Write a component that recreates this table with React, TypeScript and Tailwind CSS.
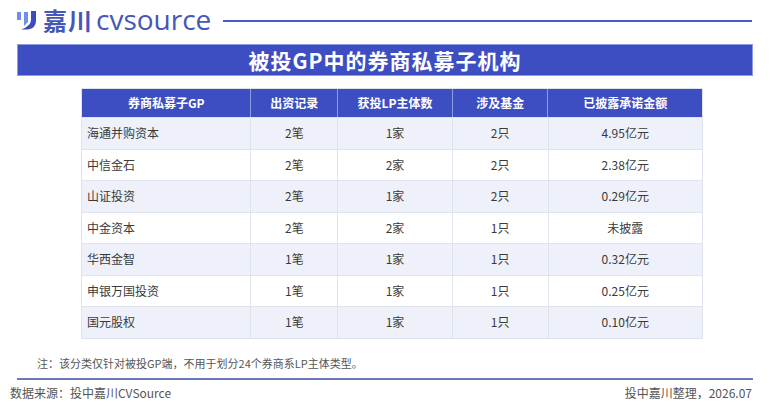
import React from "react";

const rows = [
  ["海通并购资本", "2笔", "1家", "2只", "4.95亿元"],
  ["中信金石", "2笔", "2家", "2只", "2.38亿元"],
  ["山证投资", "2笔", "1家", "2只", "0.29亿元"],
  ["中金资本", "2笔", "2家", "1只", "未披露"],
  ["华西金智", "1笔", "1家", "1只", "0.32亿元"],
  ["申银万国投资", "1笔", "1家", "1只", "0.25亿元"],
  ["国元股权", "1笔", "1家", "1只", "0.10亿元"],
];

const heads = ["券商私募子GP", "出资记录", "获投LP主体数", "涉及基金", "已披露承诺金额"];
const widths = ["w-[170px]", "w-[87px]", "w-[115px]", "w-[96px]", "w-[154px]"];

export default function App() {
  return (
    <div
      className="w-[770px] h-[406px] bg-white overflow-hidden relative"
      style={{ fontFamily: '"Noto Sans CJK SC", "Noto Sans", sans-serif' }}
    >
      {/* header logo row */}
      <div className="flex items-center h-[40px] pl-[16px] pr-[18px]">
        <svg width="22" height="20" viewBox="0 0 22 20" className="mr-[5px]">
          <path d="M1 2 L5 2 L5 10 L1 10 Z" fill="#6f8ff0" />
          <path d="M8 2 L12 2 L12 12 L8 16 Z" fill="#6f8ff0" />
          <path d="M15 1 L20 1 L20 11 Q20 18 12 19.5 L5 19.5 Q15 16 15 10 Z" fill="#3b4cc0" />
        </svg>
        <span className="text-[24px] leading-[36px] font-bold text-[#4557b8] tracking-[1px]">嘉川</span>
        <span className="text-[28px] leading-[38px] text-[#4557b8] ml-[3px] pb-[3px]" style={{ fontFamily: '"Open Sans", sans-serif', fontWeight: 500 }}>cvsource</span>
        <div className="flex-1 h-[2px] bg-[#4a5cc2] ml-[12px] mt-[2px]" />
      </div>

      {/* title bar */}
      <div className="mx-[17px] mt-[4px] h-[32px] bg-[#3d4ec2] border border-[#8d9be0] flex items-center justify-center">
        <span className="text-white text-[21px] font-bold leading-none tracking-[1px]">被投GP中的券商私募子机构</span>
      </div>

      {/* table */}
      <div className="ml-[81px] mt-[12px] w-[622px] border border-[#dfe3ee]">
        <div className="flex h-[28px] bg-[#3d4ec2]">
          {heads.map((h, i) => (
            <div
              key={h}
              className={`${widths[i]} flex items-center justify-center text-white text-[12px] font-bold ${i < 4 ? "border-r border-[#8d9be0]" : ""}`}
            >
              {h}
            </div>
          ))}
        </div>
        {rows.map((r, ri) => (
          <div
            key={r[0]}
            className={`flex h-[31.5px] ${ri % 2 === 0 ? "bg-[#eef1f9]" : "bg-white"} border-t border-[#dfe3ee]`}
          >
            {r.map((c, i) => (
              <div
                key={i}
                className={`${widths[i]} flex items-center ${i === 0 ? "justify-start pl-[5px]" : "justify-center"} text-[12px] text-[#3a3a3a] ${i < 4 ? "border-r border-[#dfe3ee]" : ""}`}
              >
                {c}
              </div>
            ))}
          </div>
        ))}
      </div>

      {/* note */}
      <div className="ml-[37px] mt-[19px] text-[11px] text-[#555555] leading-none">
        注：该分类仅针对被投GP端，不用于划分24个券商系LP主体类型。
      </div>
      <div className="mx-[17px] mt-[9px] h-[2px] bg-[#6c78b8]" />
      <div className="flex justify-between pl-[10px] pr-[18px] mt-[7px] text-[12px] text-[#555555] leading-none">
        <span>数据来源：投中嘉川CVSource</span>
        <span>投中嘉川整理，2026.07</span>
      </div>
    </div>
  );
}
